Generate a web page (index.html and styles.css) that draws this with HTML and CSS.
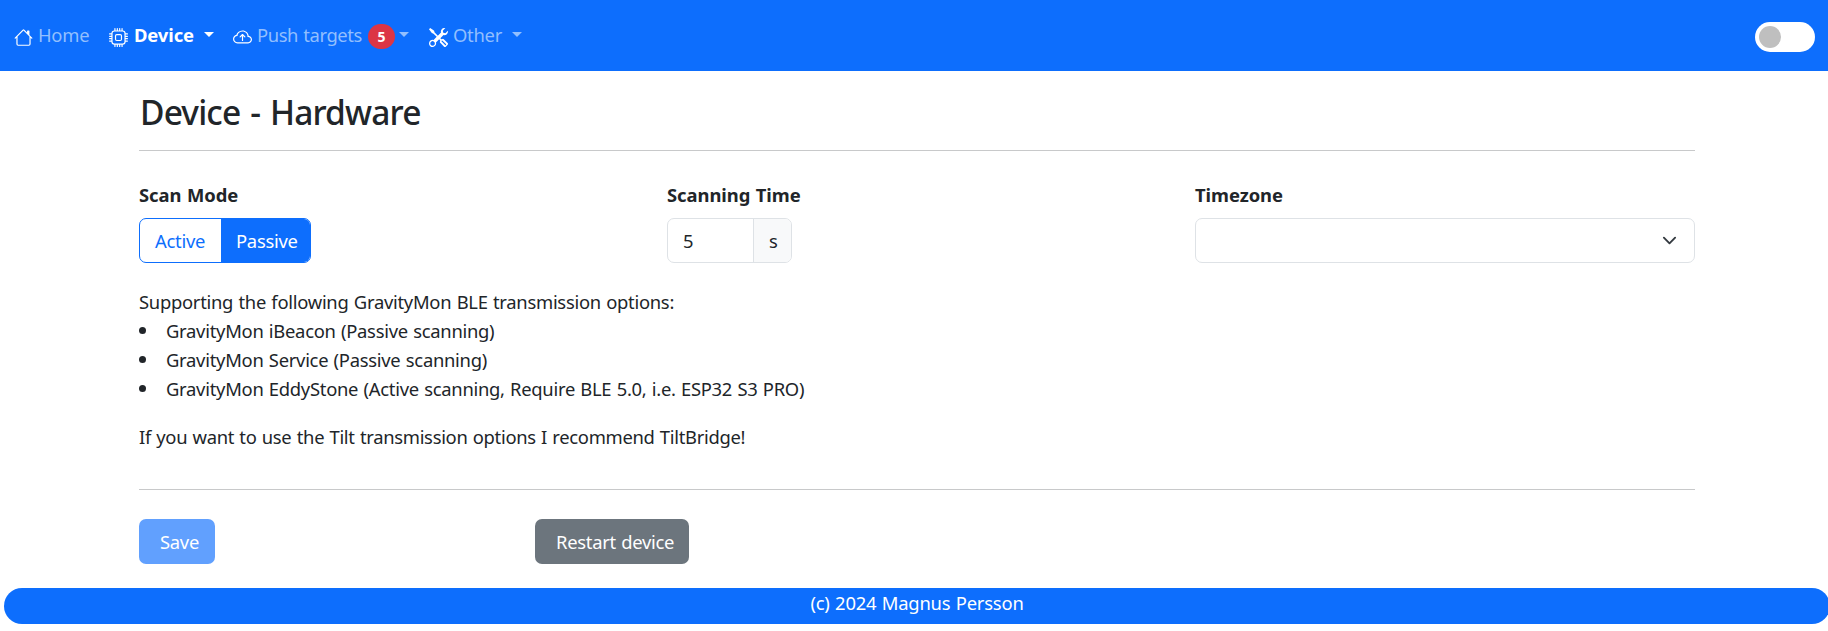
FILE: index.html
```html
<!DOCTYPE html>
<html lang="en">
<head>
<meta charset="utf-8">
<title>Device - Hardware</title>
<link rel="stylesheet" href="styles.css">
</head>
<body>
<nav class="navbar">
  <a class="nav-item home">
    <svg class="icon" viewBox="0 0 16 16"><path d="M8.707 1.5a1 1 0 0 0-1.414 0L.646 8.146a.5.5 0 0 0 .708.708L2 8.207V13.5A1.5 1.5 0 0 0 3.5 15h9a1.5 1.5 0 0 0 1.5-1.5V8.207l.646.647a.5.5 0 0 0 .708-.708L13 5.793V2.5a.5.5 0 0 0-.5-.5h-1a.5.5 0 0 0-.5.5v1.293zM13 7.207V13.5a.5.5 0 0 1-.5.5h-9a.5.5 0 0 1-.5-.5V7.207l5-5z"/></svg>
    <span class="nav-label">Home</span>
  </a>
  <a class="nav-item device active">
    <svg class="icon" viewBox="0 0 16 16"><path d="M5 0a.5.5 0 0 1 .5.5V2h1V.5a.5.5 0 0 1 1 0V2h1V.5a.5.5 0 0 1 1 0V2h1V.5a.5.5 0 0 1 1 0V2A2.5 2.5 0 0 1 14 4.5h1.5a.5.5 0 0 1 0 1H14v1h1.5a.5.5 0 0 1 0 1H14v1h1.5a.5.5 0 0 1 0 1H14v1h1.5a.5.5 0 0 1 0 1H14a2.5 2.5 0 0 1-2.5 2.5v1.5a.5.5 0 0 1-1 0V14h-1v1.5a.5.5 0 0 1-1 0V14h-1v1.5a.5.5 0 0 1-1 0V14h-1v1.5a.5.5 0 0 1-1 0V14A2.5 2.5 0 0 1 2 11.5H.5a.5.5 0 0 1 0-1H2v-1H.5a.5.5 0 0 1 0-1H2v-1H.5a.5.5 0 0 1 0-1H2v-1H.5a.5.5 0 0 1 0-1H2A2.5 2.5 0 0 1 4.5 2V.5A.5.5 0 0 1 5 0m-.5 3A1.5 1.5 0 0 0 3 4.5v7A1.5 1.5 0 0 0 4.5 13h7a1.5 1.5 0 0 0 1.5-1.5v-7A1.5 1.5 0 0 0 11.5 3zM5 6.5A1.5 1.5 0 0 1 6.5 5h3A1.5 1.5 0 0 1 11 6.5v3A1.5 1.5 0 0 1 9.5 11h-3A1.5 1.5 0 0 1 5 9.5zM6.5 6a.5.5 0 0 0-.5.5v3a.5.5 0 0 0 .5.5h3a.5.5 0 0 0 .5-.5v-3a.5.5 0 0 0-.5-.5z"/></svg>
    <span class="nav-label">Device</span>
    <i class="caret"></i>
  </a>
  <a class="nav-item push">
    <svg class="icon" viewBox="0 0 16 16"><path d="M7.646 5.146a.5.5 0 0 1 .708 0l2 2a.5.5 0 0 1-.708.708L8.5 6.707V10.5a.5.5 0 0 1-1 0V6.707L6.354 7.854a.5.5 0 1 1-.708-.708z"/><path d="M4.406 3.342A5.53 5.53 0 0 1 8 2c2.69 0 4.923 2 5.166 4.579C14.758 6.804 16 8.137 16 9.773 16 11.569 14.502 13 12.687 13H3.781C1.708 13 0 11.366 0 9.318c0-1.763 1.266-3.223 2.942-3.593.143-.863.698-1.723 1.464-2.383m.653.757c-.757.653-1.153 1.44-1.153 2.056v.448l-.445.049C2.064 6.805 1 7.952 1 9.318 1 10.785 2.23 12 3.781 12h8.906C13.98 12 15 10.988 15 9.773c0-1.216-1.02-2.228-2.313-2.228h-.5v-.5C12.188 4.825 10.328 3 8 3a4.53 4.53 0 0 0-2.941 1.1z"/></svg>
    <span class="nav-label">Push targets</span>
    <span class="badge">5</span>
    <i class="caret"></i>
  </a>
  <a class="nav-item other">
    <svg class="icon" viewBox="0 0 16 16"><path d="M1 0 0 1l2.2 3.081a1 1 0 0 0 .815.419h.07a1 1 0 0 1 .708.293l2.675 2.675-2.617 2.654A3.003 3.003 0 0 0 0 13a3 3 0 1 0 5.878-.851l2.654-2.617.968.968-.305.914a1 1 0 0 0 .242 1.023l3.27 3.27a.997.997 0 0 0 1.414 0l1.586-1.586a.997.997 0 0 0 0-1.414l-3.27-3.27a1 1 0 0 0-1.023-.242L10.5 9.5l-.96-.96 2.68-2.643A3.005 3.005 0 0 0 16 3q0-.405-.102-.777l-2.14 2.141L12 4l-.364-1.757L13.777.102a3 3 0 0 0-3.675 3.68L7.462 6.46 4.793 3.793a1 1 0 0 1-.293-.707v-.071a1 1 0 0 0-.419-.814zm9.646 10.646a.5.5 0 0 1 .708 0l2.914 2.915a.5.5 0 0 1-.707.707l-2.915-2.914a.5.5 0 0 1 0-.708M3 11l.471.242.529.026.287.445.445.287.026.529L5 13l-.242.471-.026.529-.445.287-.287.445-.529.026L3 15l-.471-.242L2 14.732l-.287-.445L1.268 14l-.026-.529L1 13l.242-.471.026-.529.445-.287.287-.445.529-.026z"/></svg>
    <span class="nav-label">Other</span>
    <i class="caret"></i>
  </a>
  <span class="toggle"><i class="knob"></i></span>
</nav>
<main class="container">
  <h1 class="title">Device - Hardware</h1>
  <hr class="rule">
  <div class="fields">
    <div class="field">
      <div class="label">Scan Mode</div>
      <div class="btn-group"><span class="opt">Active</span><span class="opt on">Passive</span></div>
    </div>
    <div class="field">
      <div class="label">Scanning Time</div>
      <div class="input-group"><span class="value">5</span><span class="unit">s</span></div>
    </div>
    <div class="field">
      <div class="label">Timezone</div>
      <div class="select"><svg class="chevron" viewBox="0 0 16 16"><path d="m2 5 6 6 6-6"/></svg></div>
    </div>
  </div>
  <div class="info">
    <p class="line">Supporting the following GravityMon BLE transmission options:</p>
    <ul class="list">
      <li class="line">GravityMon iBeacon (Passive scanning)</li>
      <li class="line">GravityMon Service (Passive scanning)</li>
      <li class="line">GravityMon EddyStone (Active scanning, Require BLE 5.0, i.e. ESP32 S3 PRO)</li>
    </ul>
    <p class="line note">If you want to use the Tilt transmission options I recommend TiltBridge!</p>
  </div>
  <hr class="rule">
  <div class="actions">
    <div class="action"><button class="btn primary">Save</button></div>
    <div class="action"><button class="btn secondary">Restart device</button></div>
  </div>
</main>
<footer class="footer">(c) 2024 Magnus Persson</footer>
</body>
</html>
```
FILE: styles.css
```css
* { box-sizing: border-box; }
body {
  margin: 0;
  font-family: "Noto Sans", "Open Sans", sans-serif;
  font-size: 18.4px;
  line-height: 29px;
  letter-spacing: -0.27px;
  word-spacing: 0.8px;
  color: #212529;
  background: #fff;
  overflow: hidden;
}
.navbar {
  height: 71px;
  background: #0d6efd;
  display: flex;
  align-items: flex-start;
  padding: 21px 13px 0 14px;
  color: #92bffe;
}
.nav-item { display: flex; align-items: flex-start; height: 29px; white-space: nowrap; }
.home { width: 95px; }
.device { width: 124px; }
.push { width: 196px; }
.icon { width: 19px; height: 19px; margin-top: 7px; fill: #fff; flex: none; }
.nav-label { margin-left: 5px; margin-top: -1px; flex: none; }
.home .nav-label { width: 57px; }
.device .nav-label { width: 70px; margin-left: 6px; letter-spacing: -0.1px; }
.push .nav-label { width: 111px; letter-spacing: -0.4px; }
.other .nav-label { width: 59px; }
.active { color: #fff; font-weight: 700; }
.caret {
  flex: none;
  margin-top: 11px;
  border: 5px solid transparent;
  border-top-color: currentColor;
  border-bottom: 0;
}
.badge {
  flex: none;
  width: 27px;
  height: 25px;
  margin: 3px 4px 0 0;
  border-radius: 13px;
  background: #dc3545;
  color: #fff;
  font-size: 14px;
  font-weight: 700;
  line-height: 25px;
  text-align: center;
  letter-spacing: 0;
}
.toggle {
  margin: 1px 0 0 auto;
  width: 60px;
  height: 30px;
  border-radius: 15px;
  background: #fff;
  padding: 4px;
}
.knob { display: block; width: 22px; height: 22px; border-radius: 50%; background: #bfbfbf; }
.container { width: 1556px; margin-left: 139px; }
.title { margin: 0; padding: 21px 0 0 1px; height: 79px; font-size: 33.5px; line-height: 40px; font-weight: 500; letter-spacing: -0.85px; word-spacing: 2px; }
.rule { margin: 0; border: 0; height: 1px; background: #c8c9ca; }
.fields { display: grid; grid-template-columns: repeat(3, 1fr); column-gap: 28px; padding-top: 29px; }
.label { font-weight: 700; height: 38px; letter-spacing: -0.05px; }
.btn-group { display: flex; width: 172px; height: 45px; border: 1px solid #0d6efd; border-radius: 7px; overflow: hidden; color: #0d6efd; }
.opt { width: 81px; flex: none; padding: 7px 0 0 15px; }
.opt.on { width: 90px; background: #0d6efd; color: #fff; }
.input-group { display: flex; width: 125px; height: 45px; border: 1px solid #dee2e6; border-radius: 7px; overflow: hidden; }
.value { width: 85px; padding: 7px 0 0 15px; }
.unit { flex: 1; padding: 7px 0 0 15px; background: #f8f9fa; border-left: 1px solid #dee2e6; }
.select { display: flex; justify-content: flex-end; align-items: center; height: 45px; border: 1px solid #dee2e6; border-radius: 7px; padding-right: 17px; }
.chevron { width: 15px; height: 15px; fill: none; stroke: #343a40; stroke-width: 2; stroke-linecap: round; stroke-linejoin: round; }
.info { padding-top: 24px; height: 226px; white-space: nowrap; }
.line { margin: 0; }
.list { margin: 0; padding: 0; list-style: none; }
.list .line { display: flex; }
.list .line::before { content: ""; width: 7px; height: 7px; margin: 11px 20px 0 0; border-radius: 50%; background: #212529; }
.note { margin-top: 19px; letter-spacing: -0.3px; }
.actions { display: flex; padding-top: 29px; }
.action { width: 396px; }
.btn { height: 45px; border: 0; border-radius: 7px; font: inherit; letter-spacing: inherit; word-spacing: inherit; color: #fff; padding: 0 0 0 21px; text-align: left; white-space: nowrap; }
.primary { width: 76px; background: #61a0fe; }
.secondary { width: 154px; background: #6c757d; }
.footer { margin: 24px 0 0 4px; width: 1826px; height: 36px; border-radius: 18px; background: #0d6efd; color: #fff; text-align: center; line-height: 30px; letter-spacing: -0.2px; }
```
